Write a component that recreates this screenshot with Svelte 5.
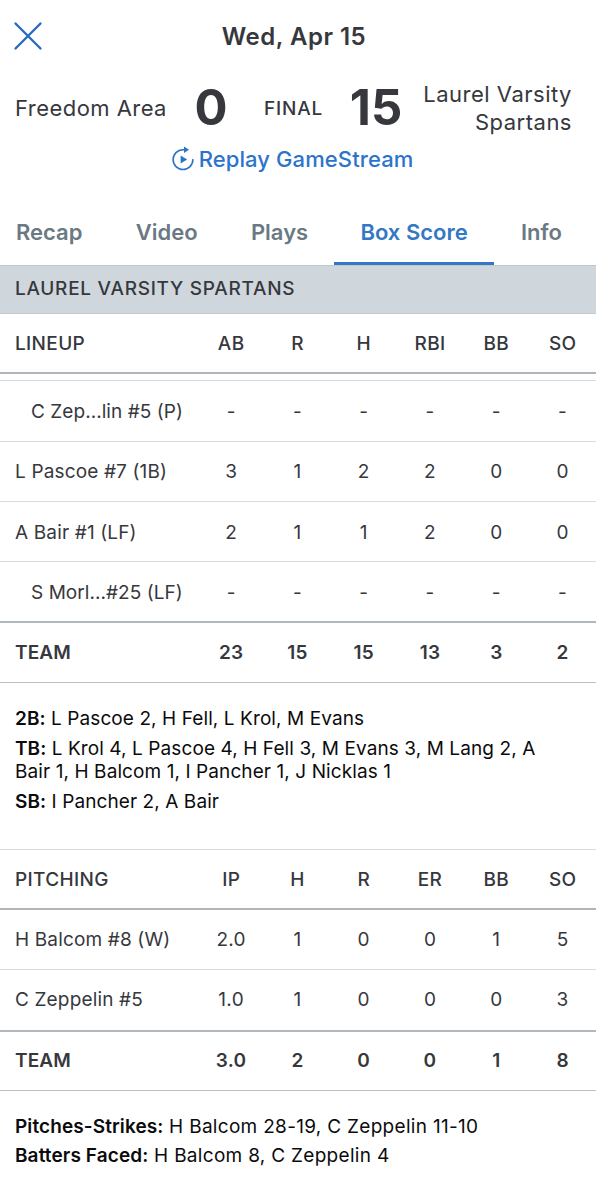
<script lang="ts">
    type Row = { name: string; stats: string[]; sub?: boolean };

    const tabs = ['Recap', 'Video', 'Plays', 'Box Score', 'Info'];
    let active = $state('Box Score');

    const lineupCols = ['AB', 'R', 'H', 'RBI', 'BB', 'SO'];
    const lineup: Row[] = [
        { name: 'C Zep...lin #5 (P)', stats: ['-', '-', '-', '-', '-', '-'], sub: true },
        { name: 'L Pascoe #7 (1B)', stats: ['3', '1', '2', '2', '0', '0'] },
        { name: 'A Bair #1 (LF)', stats: ['2', '1', '1', '2', '0', '0'] },
        { name: 'S Morl...#25 (LF)', stats: ['-', '-', '-', '-', '-', '-'], sub: true },
    ];
    const lineupTeam = ['23', '15', '15', '13', '3', '2'];
    const lineupNotes = [
        { label: '2B:', text: 'L Pascoe 2, H Fell, L Krol, M Evans' },
        { label: 'TB:', text: 'L Krol 4, L Pascoe 4, H Fell 3, M Evans 3, M Lang 2, A Bair 1, H Balcom 1, I Pancher 1, J Nicklas 1' },
        { label: 'SB:', text: 'I Pancher 2, A Bair' },
    ];

    const pitchingCols = ['IP', 'H', 'R', 'ER', 'BB', 'SO'];
    const pitching: Row[] = [
        { name: 'H Balcom #8 (W)', stats: ['2.0', '1', '0', '0', '1', '5'] },
        { name: 'C Zeppelin #5', stats: ['1.0', '1', '0', '0', '0', '3'] },
    ];
    const pitchingTeam = ['3.0', '2', '0', '0', '1', '8'];
    const pitchingNotes = [
        { label: 'Pitches-Strikes:', text: 'H Balcom 28-19, C Zeppelin 11-10' },
        { label: 'Batters Faced:', text: 'H Balcom 8, C Zeppelin 4' },
    ];
</script>

{#snippet statRow(name: string, stats: string[], kind: string)}
    <div class="row {kind}">
        <span class="name">{name}</span>
        {#each stats as s}
            <span class="stat">{s}</span>
        {/each}
    </div>
{/snippet}

{#snippet noteList(notes: { label: string; text: string }[])}
    <div class="notes">
        {#each notes as n}
            <p><b>{n.label}</b> {n.text}</p>
        {/each}
    </div>
{/snippet}

<div class="screen">
    <header class="top">
        <button class="close" aria-label="Close">
            <svg width="30" height="30" viewBox="0 0 30 30">
                <path d="M2.5 2.5 27.5 27.5M27.5 2.5 2.5 27.5" />
            </svg>
        </button>
        <h1>Wed, Apr 15</h1>
    </header>

    <div class="score">
        <span class="team away">Freedom Area</span>
        <span class="runs">0</span>
        <span class="final">FINAL</span>
        <span class="runs">15</span>
        <span class="team home">Laurel Varsity Spartans</span>
    </div>

    <button class="replay">
        <svg width="24" height="26" viewBox="0 0 24 26">
            <path class="arc" d="M13.5 3.7H12A9.9 9.9 0 1 0 21.9 13.6" />
            <path class="fill" d="M13 .6 18 3.8 13 7Z" />
            <path class="fill" d="M9.6 9.6 16.2 13.6 9.6 17.6Z" />
        </svg>
        <span>Replay GameStream</span>
    </button>

    <nav class="tabs">
        {#each tabs as tab}
            <button class="tab" class:active={tab === active} onclick={() => (active = tab)}>{tab}</button>
        {/each}
    </nav>

    <div class="team-bar">LAUREL VARSITY SPARTANS</div>

    <section class="batting">
        {@render statRow('LINEUP', lineupCols, 'head')}
        <div class="scrolled"></div>
        {#each lineup as r}
            {@render statRow(r.name, r.stats, r.sub ? 'player sub' : 'player')}
        {/each}
        {@render statRow('TEAM', lineupTeam, 'total')}
        {@render noteList(lineupNotes)}
    </section>

    <section class="pitching">
        {@render statRow('PITCHING', pitchingCols, 'head')}
        {#each pitching as r}
            {@render statRow(r.name, r.stats, 'player')}
        {/each}
        {@render statRow('TEAM', pitchingTeam, 'total')}
        {@render noteList(pitchingNotes)}
    </section>
</div>

<style>
    :global(body) { background: #fff; }
    .screen {
        width: 596px;
        height: 1199px;
        overflow: hidden;
        font-family: Inter, "Liberation Sans", sans-serif;
        color: #36383d;
        background: #fff;
    }
    button {
        padding: 0;
        border: 0;
        background: none;
        font: inherit;
        cursor: pointer;
    }
    .top {
        display: grid;
        grid-template-columns: 60px 1fr 60px;
        align-items: center;
        height: 72px;
    }
    .close { display: flex; padding-left: 13px; }
    .close path { fill: none; stroke: #2a6abf; stroke-width: 2.4; stroke-linecap: round; }
    h1 {
        margin: 0;
        padding: 2px 8px 0 0;
        text-align: center;
        font-size: 24px;
        font-weight: 600;
        line-height: 30px;
        letter-spacing: 0.5px;
    }
    .score {
        display: grid;
        grid-template-columns: 166px 90px 75px 90px 151px;
        align-items: center;
        height: 72px;
    }
    .team { font-size: 22px; line-height: 28px; letter-spacing: 0.45px; }
    .away { padding-left: 15px; white-space: nowrap; }
    .home { text-align: right; letter-spacing: 0.5px; }
    .runs { font-size: 49px; font-weight: 700; line-height: 56px; text-align: center; }
    .final { font-size: 19px; font-weight: 500; letter-spacing: 0.8px; text-align: center; }
    .replay {
        display: flex;
        align-items: center;
        justify-content: center;
        gap: 4px;
        width: 584px;
        height: 30px;
        color: #2c74cb;
        font-size: 22px;
        font-weight: 500;
        letter-spacing: 0.1px;
    }
    .arc { fill: none; stroke: #2c74cb; stroke-width: 1.6; stroke-linecap: round; }
    .fill { fill: #2c74cb; }
    .tabs {
        display: flex;
        justify-content: space-between;
        height: 65px;
        margin: 26px 8px 0 -10px;
    }
    .tab {
        box-sizing: border-box;
        padding: 2px 26px 0;
        border-bottom: 3px solid transparent;
        color: #6a7983;
        font-size: 22px;
        font-weight: 600;
    }
    .tab.active { margin-left: -1px; color: #3377c6; border-color: #3377c6; }
    .team-bar {
        box-sizing: border-box;
        height: 49px;
        padding-left: 15px;
        border-top: 1px solid #bfc7cc;
        border-bottom: 1px solid #c3cbd0;
        background: #cfd7dd;
        font-size: 19px;
        font-weight: 550;
        line-height: 46px;
        letter-spacing: 0.73px;
    }
    .row {
        box-sizing: border-box;
        display: grid;
        grid-template-columns: 198px repeat(6, 66.3px);
        align-items: center;
        height: 60.3px;
        font-size: 19px;
        letter-spacing: 0.15px;
        border-bottom: 1px solid #d9dcde;
    }
    .name { padding-left: 15px; white-space: nowrap; }
    .stat { text-align: center; letter-spacing: 0.3px; }
    .sub .name { padding-left: 31px; letter-spacing: 0.05px; }
    .head { font-weight: 550; letter-spacing: 0.35px; border-bottom: 2px solid #b0b5ba; }
    .total { font-weight: 600; height: 59.7px; border-bottom: 1px solid #bcc0c4; }
    .player { padding-top: 1px; }
    .player:has(+ .total) { height: 61.3px; border-bottom: 2px solid #b0b8be; }
    .scrolled { height: 6px; border-bottom: 1px solid #d5dbde; }
    .notes {
        height: 166px;
        box-sizing: border-box;
        padding: 24px 50px 0 15px;
        color: #0b0b0c;
        font-size: 19px;
        line-height: 23.5px;
        letter-spacing: 0.09px;
    }
    .notes p { margin: 0 0 6.3px; }
    .notes b { font-weight: 600; letter-spacing: 0.05px; }
    .pitching { border-top: 1px solid #d9dcde; }
    .pitching .row { height: 60px; }
    .pitching .head { padding-top: 1px; }
    .pitching .player { padding-top: 0; }
    .pitching .player:has(+ .total) { height: 61.5px; }
    .pitching .total { height: 59px; }
    .pitching .notes { letter-spacing: 0.3px; }
    .pitching .notes b { letter-spacing: 0.1px; }
</style>
